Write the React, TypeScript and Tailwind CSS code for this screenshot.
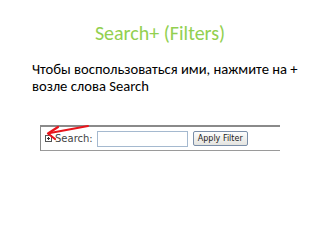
import React from 'react'

function PlusBox() {
  return (
    <svg width="7" height="7" viewBox="0 0 7 7" className="shrink-0">
      <rect x="0.5" y="0.5" width="6" height="6" fill="#fff" stroke="#555" />
      <path d="M2 3.5h3M3.5 2v3" stroke="#333" strokeWidth="1" />
    </svg>
  )
}

function RedArrow() {
  return (
    <svg width="46" height="16" viewBox="0 0 46 16" className="absolute left-[3px] top-[-3px]">
      <path d="M44 2 L6 9" stroke="#e8141b" strokeWidth="2" strokeLinecap="round" fill="none" />
      <path d="M14 3 L4 9.5 L11 15" stroke="#e8141b" strokeWidth="2.2" strokeLinecap="round" strokeLinejoin="round" fill="none" />
    </svg>
  )
}

export default function App() {
  return (
    <div className="w-[320px] h-[240px] bg-white overflow-hidden" style={{ fontFamily: 'Calibri, Carlito, "Open Sans", sans-serif' }}>
      <h1 className="pt-[21px] text-center text-[20px] leading-[24px] text-[#92d050]">Search+ (Filters)</h1>

      <p className="mt-[16px] pl-[32px] pr-[10px] text-[14.6px] leading-[17px] text-black">
        Чтобы воспользоваться ими, нажмите на +<br />
        возле слова Search
      </p>

      <div className="relative ml-[40px] mt-[30px] w-[240px] h-[26px] border-t-2 border-b border-l border-t-[#8a8a8a] border-b-[#9a9a9a] border-l-[#8a8a8a] flex items-center pl-[4px] gap-[3px]">
        <PlusBox />
        <span className="text-[10px] text-[#444]" style={{ fontFamily: 'Verdana, "DejaVu Sans", sans-serif' }}>Search:</span>
        <div className="ml-[1px] w-[91px] h-[16px] border border-[#a5b9cf] bg-white" />
        <button
          className="ml-[2px] w-[55px] h-[15px] border border-[#7a8ea8] rounded-[2px] bg-gradient-to-b from-[#fdfdfd] to-[#e4e4e0] text-[8px] leading-[13px] text-[#222]"
          style={{ fontFamily: 'Tahoma, "DejaVu Sans", sans-serif' }}
        >
          Apply Filter
        </button>
        <RedArrow />
      </div>
    </div>
  )
}
